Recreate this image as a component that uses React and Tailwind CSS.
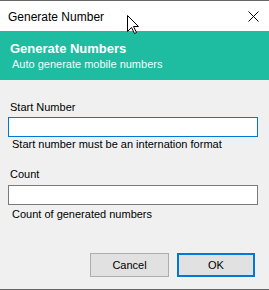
import React from "react";

export default function App() {
  const font = { fontFamily: '"Liberation Sans", Arial, sans-serif' };
  return (
    <div
      className="relative w-[269px] h-[290px] bg-[#f0f0f0] border-t border-b border-[#666666] flex flex-col text-black overflow-hidden"
      style={font}
    >
      {/* Title bar */}
      <div className="h-[30px] bg-white flex items-center justify-between pl-[8px] pr-[10px] shrink-0">
        <span className="text-[12px] leading-[14px] mt-[1px]">Generate Number</span>
        <svg width="11" height="11" viewBox="0 0 11 11" className="mt-[1px]">
          <path d="M0.5 0.5 L10.5 10.5 M10.5 0.5 L0.5 10.5" stroke="#000" strokeWidth="1" fill="none" />
        </svg>
      </div>

      {/* Teal header */}
      <div className="h-[49px] bg-[#1ebda1] shrink-0 pl-[10px] pt-[10px]">
        <div className="text-[13px] leading-[15px] font-bold text-white">Generate Numbers</div>
        <div className="text-[11px] leading-[13px] text-[#eefcf8] mt-[2px] ml-[2px]">Auto generate mobile numbers</div>
      </div>

      {/* Body */}
      <div className="flex flex-col pt-[21px]">
        <div className="text-[11px] leading-[13px] ml-[10px]">Start Number</div>
        <input
          className="ml-[8px] mt-[3px] w-[250px] h-[20px] bg-white border border-[#0078d7] outline-none"
          readOnly
        />
        <div className="text-[11px] leading-[13px] ml-[12px] mt-[1px]">
          Start number must be an internation format
        </div>

        <div className="text-[11px] leading-[13px] ml-[10px] mt-[17px]">Count</div>
        <input
          className="ml-[8px] mt-[4px] w-[250px] h-[20px] bg-white border border-[#7a7a7a] outline-none"
          readOnly
        />
        <div className="text-[11px] leading-[13px] ml-[12px] mt-[3px]">Count of generated numbers</div>

        <div className="flex justify-end gap-[8px] pr-[14px] mt-[32px]">
          <button className="w-[79px] h-[24px] bg-[#e1e1e1] border border-[#adadad] text-[11px] leading-[13px]">
            Cancel
          </button>
          <button className="w-[78px] h-[24px] bg-[#e1e1e1] border-2 border-[#0078d7] text-[11px] leading-[13px]">
            OK
          </button>
        </div>
      </div>

      {/* Mouse cursor */}
      <svg
        className="absolute left-[127px] top-[14px]"
        width="13"
        height="20"
        viewBox="0 0 13 20"
      >
        <path
          d="M0.5 0.5 L0.5 16.5 L4.5 12.5 L7.5 18.5 L9.5 17.5 L6.5 11.5 L11.5 11.5 Z"
          fill="#fff"
          stroke="#000"
          strokeWidth="1"
          strokeLinejoin="miter"
        />
      </svg>
    </div>
  );
}
